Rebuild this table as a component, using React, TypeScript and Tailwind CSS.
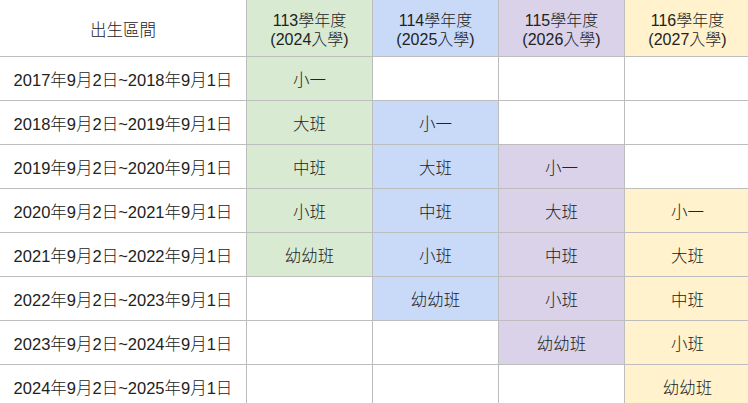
const years = [
  { head: '113學年度', sub: '(2024入學)', bg: 'bg-[#d9ead3]' },
  { head: '114學年度', sub: '(2025入學)', bg: 'bg-[#c9daf8]' },
  { head: '115學年度', sub: '(2026入學)', bg: 'bg-[#d9d2e9]' },
  { head: '116學年度', sub: '(2027入學)', bg: 'bg-[#fff2cc]' },
]

const rows: { range: string; cells: string[] }[] = [
  { range: '2017年9月2日~2018年9月1日', cells: ['小一', '', '', ''] },
  { range: '2018年9月2日~2019年9月1日', cells: ['大班', '小一', '', ''] },
  { range: '2019年9月2日~2020年9月1日', cells: ['中班', '大班', '小一', ''] },
  { range: '2020年9月2日~2021年9月1日', cells: ['小班', '中班', '大班', '小一'] },
  { range: '2021年9月2日~2022年9月1日', cells: ['幼幼班', '小班', '中班', '大班'] },
  { range: '2022年9月2日~2023年9月1日', cells: ['', '幼幼班', '小班', '中班'] },
  { range: '2023年9月2日~2024年9月1日', cells: ['', '', '幼幼班', '小班'] },
  { range: '2024年9月2日~2025年9月1日', cells: ['', '', '', '幼幼班'] },
]

const cell = 'flex items-center justify-center border-r border-b border-[#bdbdbd] pt-[4px]'

export default function App() {
  return (
    <div
      className="w-[748px] h-[403px] overflow-hidden bg-white text-[#222] text-[16.5px] font-light"
      style={{ fontFamily: '"Liberation Sans", "Noto Sans CJK TC", sans-serif' }}
    >
      <div className="grid w-[751px] grid-cols-[247px_126px_126px_126px_126px] grid-rows-[57px_repeat(8,44px)]">
        {/* header */}
        <div className={`${cell} bg-white`}>出生區間</div>
        {years.map((y) => (
          <div key={y.head} className={`${cell} ${y.bg} flex-col text-[16px] leading-[19px]`}>
            <span>{y.head}</span>
            <span>{y.sub}</span>
          </div>
        ))}

        {/* body */}
        {rows.map((r) => (
          <>
            <div key={r.range} className={`${cell} bg-white`}>{r.range}</div>
            {r.cells.map((c, i) => (
              <div key={r.range + i} className={`${cell} ${c ? years[i].bg : 'bg-white'}`}>
                {c}
              </div>
            ))}
          </>
        ))}
      </div>
    </div>
  )
}
